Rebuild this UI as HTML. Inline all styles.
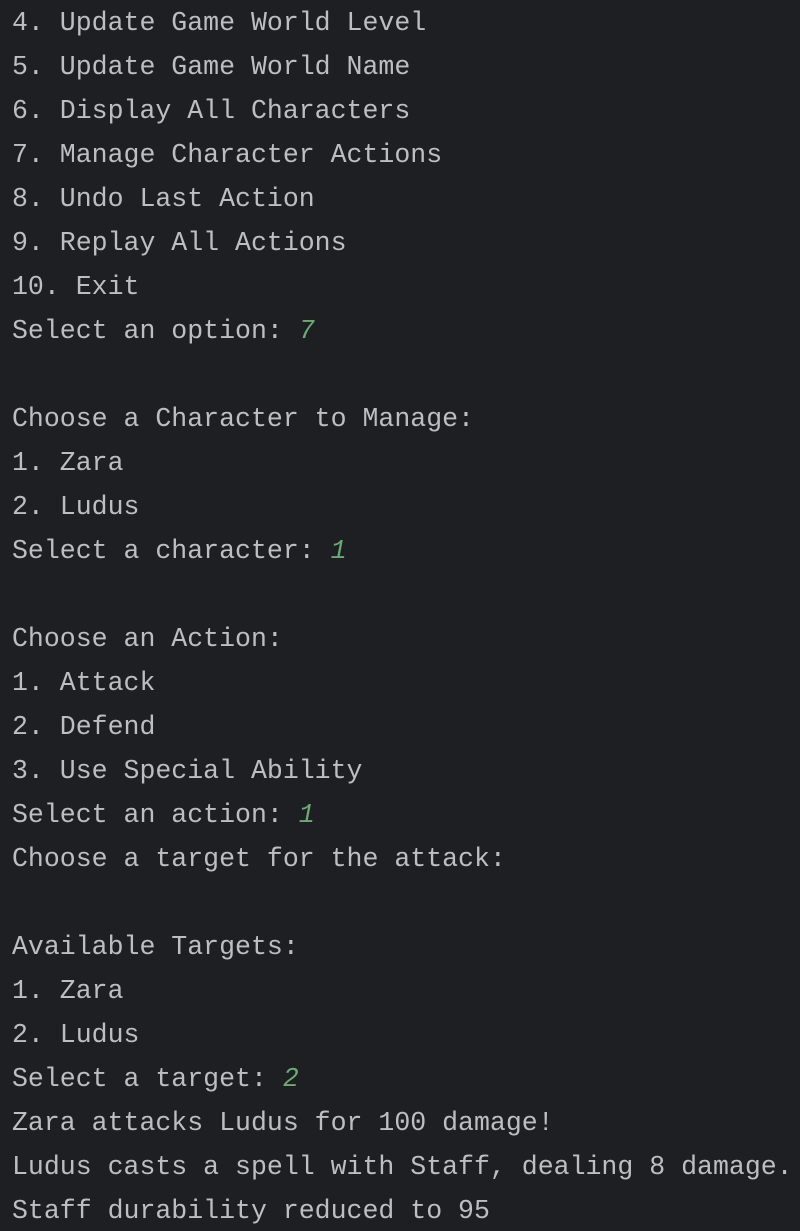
<!DOCTYPE html>
<html><head><meta charset="utf-8"><style>
html,body{margin:0;padding:0;background:#1e1f22;width:800px;height:1231px;overflow:hidden}
pre{margin:0;padding:0 0 0 12px;position:relative;top:1px;font-family:"Liberation Mono","DejaVu Sans Mono",monospace;font-size:26.55px;line-height:44px;color:#bcbec4;white-space:pre}
i{color:#6aab73;font-style:italic}
</style></head><body><pre>4. Update Game World Level
5. Update Game World Name
6. Display All Characters
7. Manage Character Actions
8. Undo Last Action
9. Replay All Actions
10. Exit
Select an option: <i>7</i>

Choose a Character to Manage:
1. Zara
2. Ludus
Select a character: <i>1</i>

Choose an Action:
1. Attack
2. Defend
3. Use Special Ability
Select an action: <i>1</i>
Choose a target for the attack:

Available Targets:
1. Zara
2. Ludus
Select a target: <i>2</i>
Zara attacks Ludus for 100 damage!
Ludus casts a spell with Staff, dealing 8 damage.
Staff durability reduced to 95</pre></body></html>
